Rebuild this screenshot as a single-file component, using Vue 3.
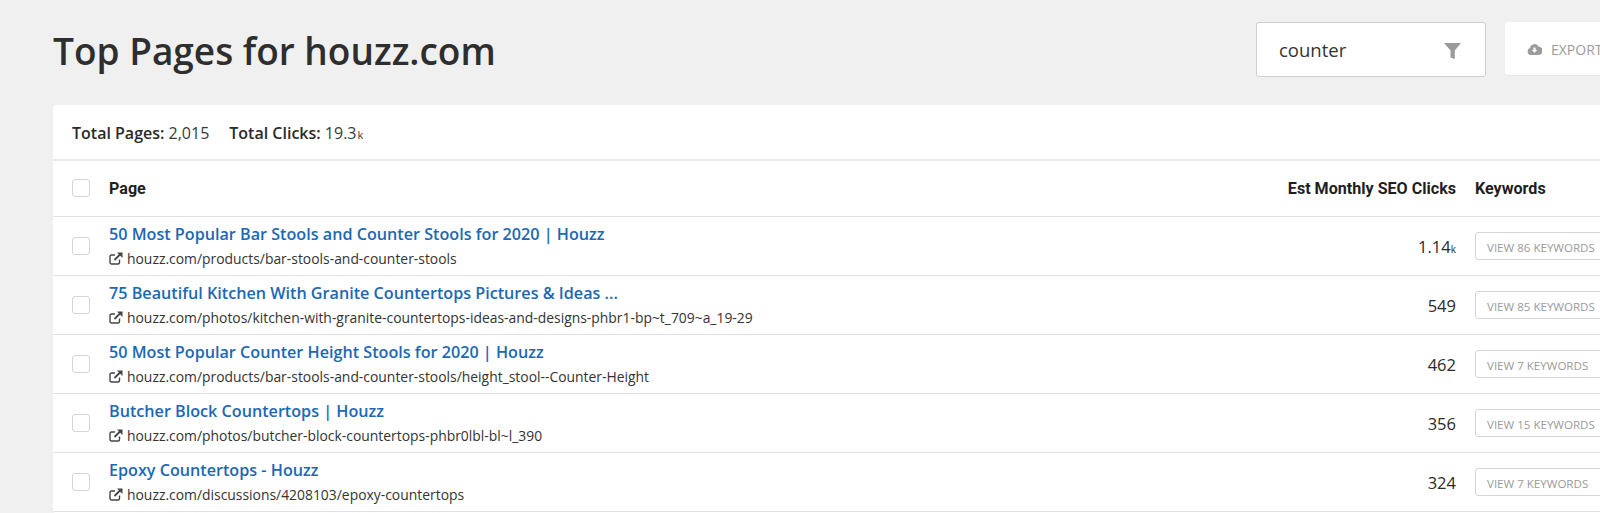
<script setup>
const rows = [
  { title: '50 Most Popular Bar Stools and Counter Stools for 2020 | Houzz', url: 'houzz.com/products/bar-stools-and-counter-stools', clicks: '1.14', unit: 'k', kw: 'VIEW 86 KEYWORDS' },
  { title: '75 Beautiful Kitchen With Granite Countertops Pictures & Ideas ...', url: 'houzz.com/photos/kitchen-with-granite-countertops-ideas-and-designs-phbr1-bp~t_709~a_19-29', clicks: '549', unit: '', kw: 'VIEW 85 KEYWORDS' },
  { title: '50 Most Popular Counter Height Stools for 2020 | Houzz', url: 'houzz.com/products/bar-stools-and-counter-stools/height_stool--Counter-Height', clicks: '462', unit: '', kw: 'VIEW 7 KEYWORDS' },
  { title: 'Butcher Block Countertops | Houzz', url: 'houzz.com/photos/butcher-block-countertops-phbr0lbl-bl~l_390', clicks: '356', unit: '', kw: 'VIEW 15 KEYWORDS' },
  { title: 'Epoxy Countertops - Houzz', url: 'houzz.com/discussions/4208103/epoxy-countertops', clicks: '324', unit: '', kw: 'VIEW 7 KEYWORDS' },
]
</script>

<template>
  <div class="page">
    <header class="top">
      <h1 class="heading">Top Pages for houzz.com</h1>
      <div class="filter">
        <span class="filter-text">counter</span>
        <svg class="funnel" width="17" height="17" viewBox="0 0 17 17"><path d="M0 1h17L10.800 8.500V17L6.500 15.500V8.500z" fill="#9b9b9b" /></svg>
      </div>
      <div class="export">
        <svg width="15" height="12" viewBox="0 0 15 12"><path d="M4 12a3.600 3.600 0 0 1-1-7 4.600 4.600 0 0 1 8.700-1.300A3.900 3.900 0 0 1 11.500 12z" fill="#9b9b9b" /><path d="M6.400 4.500h2.200v2.500h1.700L7.500 9.800 4.700 7h1.700z" fill="#fff" /></svg>
        <span>EXPORT</span>
      </div>
    </header>

    <section class="card">
      <div class="summary">
        <span class="stat"><span class="label">Total Pages:</span> 2,015</span>
        <span class="stat"><span class="label">Total Clicks:</span> 19.3<small>k</small></span>
      </div>
      <div class="row head">
        <span class="check"></span>
        <span class="main">Page</span>
        <span class="clicks">Est Monthly SEO Clicks</span>
        <span class="kw">Keywords</span>
      </div>
      <div v-for="r in rows" :key="r.title" class="row item">
        <span class="check"></span>
        <div class="main">
          <div class="title">{{ r.title }}</div>
          <div class="url">
            <svg class="ext" width="14" height="13" viewBox="0 0 14 13" fill="none" stroke="#444" stroke-width="1.400">
              <path d="M10.500 7.500v3a1.500 1.500 0 0 1-1.500 1.500H2.500A1.500 1.500 0 0 1 1 10.500v-6A1.500 1.500 0 0 1 2.500 3H6" />
              <path d="M5.500 8 11 2.500" stroke-width="1.800" />
              <path d="M8 .5h5.500V6z" fill="#444" stroke="none" />
            </svg>
            <span>{{ r.url }}</span>
          </div>
        </div>
        <span class="clicks num">{{ r.clicks }}<small v-if="r.unit">{{ r.unit }}</small></span>
        <span class="kw"><span class="kw-btn">{{ r.kw }}</span></span>
      </div>
    </section>
  </div>
</template>

<style>
html, body { margin: 0; background: #f0f0f0; overflow: hidden; }
</style>

<style scoped>
.page {
  width: 1600px;
  height: 513px;
  overflow: hidden;
  background: #f0f0f0;
  font-family: "Open Sans", sans-serif;
  color: #2a2a2a;
  box-sizing: border-box;
  padding-left: 53px;
}
.top {
  height: 105px;
  display: flex;
  align-items: flex-start;
}
.heading {
  margin: 26px 0 0;
  font-size: 37px;
  line-height: 50px;
  font-weight: 600;
  color: #2e2e2e;
  width: 1203px;
  flex: none;
  white-space: nowrap;
}
.filter {
  margin-top: 22px;
  width: 230px;
  height: 55px;
  flex: none;
  box-sizing: border-box;
  background: #fff;
  border: 1px solid #cfcfcf;
  border-radius: 3px;
  display: flex;
  align-items: center;
  justify-content: space-between;
  padding: 0 24px 0 22px;
  font-size: 18.500px;
}
.filter-text { color: #333; }
.funnel { margin-top: 1px; }
.export {
  margin: 22px 0 0 19px;
  width: 200px;
  height: 53px;
  flex: none;
  background: #fff;
  border-radius: 3px;
  display: flex;
  align-items: center;
  gap: 9px;
  padding: 1px 0 0 22px;
  box-sizing: border-box;
  color: #9b9b9b;
  font-size: 14px;
  font-weight: 400;
  box-shadow: 0 1px 1px #e6e6e6;
}
.card {
  width: 1560px;
  height: 408px;
  background: #fff;
  border-radius: 3px 0 0 3px;
}
.summary {
  height: 53px;
  border-bottom: 2px solid #ebebeb;
  display: flex;
  align-items: center;
  gap: 20px;
  padding: 1px 0 0 19px;
  box-sizing: content-box;
  margin-bottom: -1px;
  font-size: 16px;
  color: #3a3a3a;
}
.label { font-weight: 600; color: #2a2a2a; }
.stat small { font-size: 11px; margin-left: 1px; }
.row {
  display: flex;
  align-items: center;
  box-sizing: border-box;
  padding-left: 19px;
  border-bottom: 1px solid #e2e2e2;
}
.head {
  height: 57px;
  font-family: Roboto, sans-serif;
  font-weight: 700;
  font-size: 16.100px;
  color: #1f1f1f;
}
.item { height: 59px; }
.check {
  width: 18px;
  height: 18px;
  flex: none;
  box-sizing: border-box;
  border: 1px solid #d4d4d4;
  border-radius: 3px;
  margin-right: 19px;
}
.main { flex: none; width: 1177px; }
.title {
  color: #1b68b5;
  font-size: 16.170px;
  font-weight: 600;
  line-height: 21px;
  margin-top: -1px;
  white-space: nowrap;
}
.url {
  margin-top: 5px;
  display: flex;
  align-items: center;
  gap: 4px;
  font-size: 13.900px;
  line-height: 18px;
  color: #333;
  white-space: nowrap;
}
.ext { flex: none; }
.clicks { flex: none; width: 170px; text-align: right; white-space: nowrap; }
.num { font-size: 16.500px; color: #2a2a2a; padding-top: 1px; }
.num small { font-size: 10px; }
.kw { flex: none; margin-left: 19px; white-space: nowrap; }
.kw-btn {
  display: block;
  width: 140px;
  height: 28px;
  line-height: 29px;
  box-sizing: border-box;
  border: 1px solid #d4d4d4;
  border-radius: 3px;
  padding-left: 11px;
  color: #9a9a9a;
  font-size: 11.550px;
}
</style>
